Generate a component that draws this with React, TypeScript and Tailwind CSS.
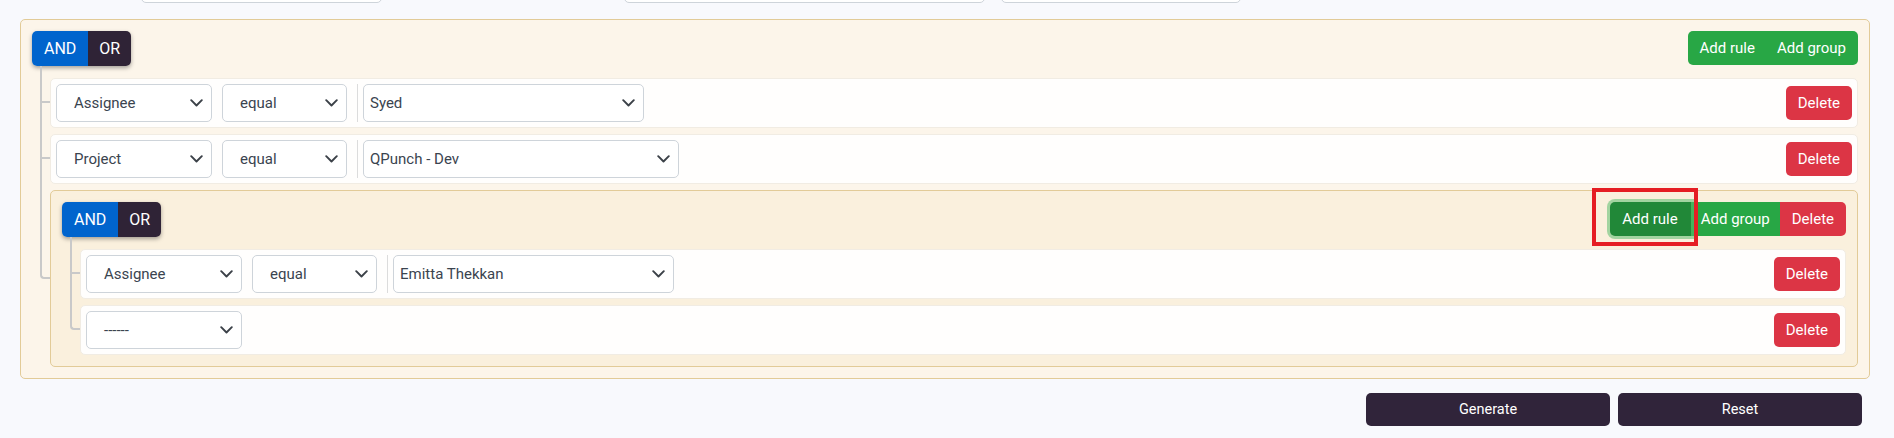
import React from "react";

type RuleData = {
  field: string;
  op?: string;
  value?: string;
  valueW?: string;
};

function Chevron() {
  return (
    <svg width="13" height="8" viewBox="0 0 13 8" fill="none" className="shrink-0">
      <path d="M1.2 1.2 6.5 6.5 11.8 1.2" stroke="#3b4148" strokeWidth="1.9" strokeLinecap="round" strokeLinejoin="round" />
    </svg>
  );
}

function Select({ label, w, pl }: { label: string; w: string; pl: string }) {
  return (
    <div className={`flex h-[38px] items-center justify-between rounded-[5px] border border-[#ced4da] bg-white pr-[8px] ${w} ${pl}`}>
      <span className="text-[15px] text-[#3a444f]">{label}</span>
      <Chevron />
    </div>
  );
}

function Rule({ rule }: { rule: RuleData }) {
  return (
    <div className="flex h-[50px] items-center rounded-[5px] border border-[#f1ece3] bg-[#fffefd] px-[5px]">
      <Select label={rule.field} w="w-[156px]" pl="pl-[17px]" />
      {rule.op && (
        <>
          <div className="ml-[10px]">
            <Select label={rule.op} w="w-[125px]" pl="pl-[17px]" />
          </div>
          <span className="ml-[10px] h-[38px] w-px bg-[#dcdcdc]" />
          <div className="ml-[5px]">
            <Select label={rule.value ?? ""} w={rule.valueW ?? "w-[281px]"} pl="pl-[6px]" />
          </div>
        </>
      )}
      <button className="ml-auto h-[34px] rounded-[5px] bg-[#dc3545] px-[12px] text-[15px] text-white">Delete</button>
    </div>
  );
}

function Combinator() {
  return (
    <div className="flex h-[35px] overflow-hidden rounded-[5px] text-[16px] text-white shadow-[0_2px_4px_rgba(0,0,0,0.35)]">
      <span className="flex items-center bg-[#0064cd] px-[12px]">AND</span>
      <span className="flex items-center bg-[#2f2336] px-[11px]">OR</span>
    </div>
  );
}

function Branch({ first, last, children }: { first: boolean; last: boolean; children: React.ReactNode }) {
  return (
    <div className="relative">
      <span
        className={`absolute left-[-10px] w-[10px] border-b-2 border-l-2 border-[#c9c9c9] ${
          first ? "top-[-12px] h-[calc(50%+12px)]" : "top-[-6px] h-[calc(50%+6px)]"
        } ${last ? "rounded-bl-[4px]" : ""}`}
      />
      {!last && <span className="absolute bottom-0 left-[-10px] top-1/2 border-l-2 border-[#c9c9c9]" />}
      {children}
    </div>
  );
}

function Group({ nested, items }: { nested?: boolean; items: React.ReactNode[] }) {
  return (
    <div
      className={`rounded-[5px] border border-[#e2cb98] p-[11px] ${
        nested ? "bg-[#faf0dd]" : "bg-[#fcf5ea]"
      }`}
    >
      <div className="flex items-start justify-between">
        <Combinator />
        {nested ? (
          <div className="flex h-[34px] text-[15px] text-white">
            <button className="relative z-10 rounded-l-[5px] bg-[#218838] pl-[12px] pr-[13px] shadow-[0_0_0_3px_rgba(90,190,110,0.55)]">
              Add rule
              <span className="pointer-events-none absolute bottom-[-10px] left-[-18px] right-[-7px] top-[-14px] border-4 border-[#e51d23]" />
            </button>
            <button className="bg-[#28a745] px-[10px]">Add group</button>
            <button className="rounded-r-[5px] bg-[#dc3545] px-[12px]">Delete</button>
          </div>
        ) : (
          <div className="flex h-[34px] overflow-hidden rounded-[5px] bg-[#28a745] text-[15px] text-white">
            <button className="pl-[12px] pr-[11px]">Add rule</button>
            <button className="pl-[11px] pr-[12px]">Add group</button>
          </div>
        )}
      </div>
      <div className="mt-[12px] flex flex-col gap-[6px] pl-[18px]">
        {items.map((item, i) => (
          <Branch key={i} first={i === 0} last={i === items.length - 1}>
            {item}
          </Branch>
        ))}
      </div>
    </div>
  );
}

export default function App() {
  const inner = (
    <Group
      nested
      items={[
        <Rule rule={{ field: "Assignee", op: "equal", value: "Emitta Thekkan" }} />,
        <Rule rule={{ field: "------" }} />,
      ]}
    />
  );

  return (
    <div className="min-h-screen overflow-hidden bg-[#f8f9fd] font-['Roboto',sans-serif]">
      {/* filter inputs cut off at top */}
      <div className="-mt-[35px] flex h-[38px] pl-[141px]">
        <div className="w-[241px] rounded-[5px] border border-[#ced4da] bg-white" />
        <div className="ml-[242px] w-[361px] rounded-[5px] border border-[#ced4da] bg-white" />
        <div className="ml-[16px] w-[240px] rounded-[5px] border border-[#ced4da] bg-white" />
      </div>

      <div className="ml-[20px] mt-[16px] w-[1850px]">
        <Group
          items={[
            <Rule rule={{ field: "Assignee", op: "equal", value: "Syed" }} />,
            <Rule rule={{ field: "Project", op: "equal", value: "QPunch - Dev", valueW: "w-[316px]" }} />,
            inner,
          ]}
        />
        <div className="mt-[14px] flex justify-end gap-[8px] pr-[8px] text-[14.5px] text-white">
          <button className="h-[33px] w-[244px] rounded-[5px] bg-[#30243a]">Generate</button>
          <button className="h-[33px] w-[244px] rounded-[5px] bg-[#30243a]">Reset</button>
        </div>
      </div>
    </div>
  );
}
